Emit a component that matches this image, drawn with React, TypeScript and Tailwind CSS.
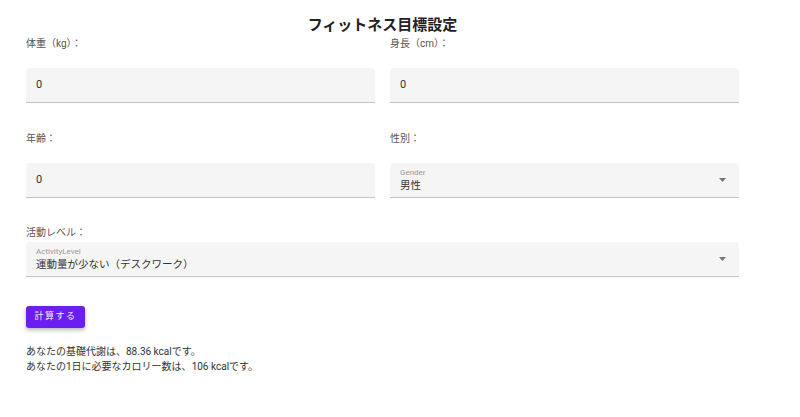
import { useState } from "react";

const font = { fontFamily: "Roboto, 'Noto Sans CJK JP', sans-serif" };

function Field({ label, value }: { label: string; value: string }) {
  return (
    <div>
      <div className="text-[10px] leading-[12px] text-[#555] h-[12px]">{label}</div>
      <div className="mt-[18px] h-[35px] bg-[#f5f5f5] rounded-t-[4px] border-b border-[#c4c4c4] flex items-center px-[10px] text-[11px] text-[#333]">
        {value}
      </div>
    </div>
  );
}

function SelectBox({ name, value }: { name: string; value: string }) {
  return (
    <div className="h-[35px] bg-[#f5f5f5] rounded-t-[4px] border-b border-[#c4c4c4] flex items-center justify-between pl-[10px] pr-[13px]">
      <div className="flex flex-col">
        <span className="text-[8px] leading-[10px] text-[#999]">{name}</span>
        <span className="text-[10.5px] leading-[15px] text-[#333]">{value}</span>
      </div>
      <svg width="7" height="4" viewBox="0 0 7 4">
        <path d="M0 0 L7 0 L3.5 4 Z" fill="#757575" />
      </svg>
    </div>
  );
}

export default function App() {
  const [bmr] = useState("88.36");
  const [cal] = useState("106");

  return (
    <div className="w-[800px] h-[417px] bg-white" style={font}>
      <div className="w-[713px] ml-[26px] pt-[16px]">
        <h1 className="text-center text-[15px] leading-[18px] font-bold text-[#222]">
          フィットネス目標設定
        </h1>
        <div className="grid grid-cols-2 gap-x-[15px] mt-[4px]">
          <Field label="体重（kg）：" value="0" />
          <Field label="身長（cm）：" value="0" />
        </div>
        <div className="grid grid-cols-2 gap-x-[15px] mt-[30px]">
          <Field label="年齢：" value="0" />
          <div>
            <div className="text-[10px] leading-[12px] text-[#555] h-[12px]">性別：</div>
            <div className="mt-[18px]">
              <SelectBox name="Gender" value="男性" />
            </div>
          </div>
        </div>
        <div className="mt-[29px]">
          <div className="text-[10px] leading-[12px] text-[#555] h-[12px]">活動レベル：</div>
          <div className="mt-[3px]">
            <SelectBox name="ActivityLevel" value="運動量が少ない（デスクワーク）" />
          </div>
        </div>
        <button className="mt-[29px] h-[22px] w-[59px] rounded-[3px] bg-[#6a1ff0] text-[#f0eefc] text-[9px] tracking-[1.5px] shadow-[0_2px_4px_rgba(0,0,0,0.3)]">
          計算する
        </button>
        <div className="mt-[16px] text-[10px] leading-[15px] text-[#333]">
          <p>あなたの基礎代謝は、{bmr} kcalです。</p>
          <p>あなたの1日に必要なカロリー数は、{cal} kcalです。</p>
        </div>
      </div>
    </div>
  );
}
